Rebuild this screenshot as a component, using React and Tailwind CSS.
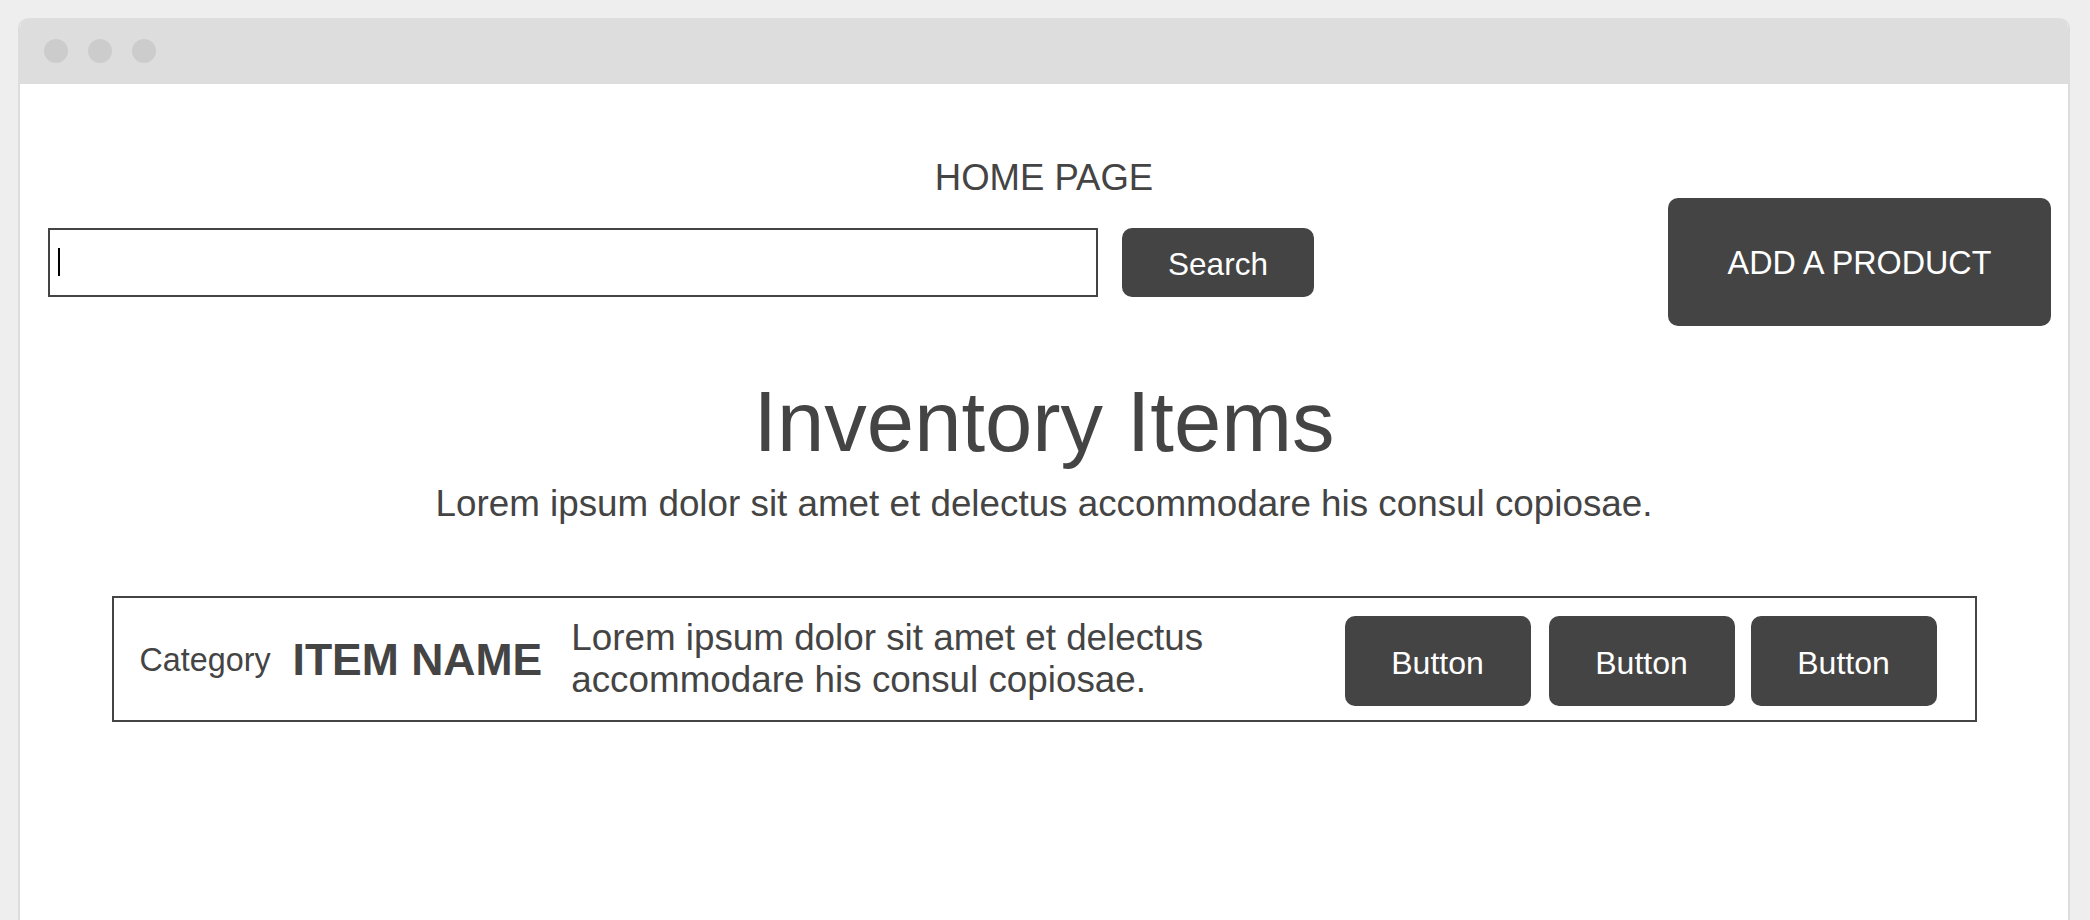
export default function App() {
  const font = { fontFamily: '"Liberation Sans", Arial, sans-serif' };
  return (
    <div className="w-[2090px] h-[920px] bg-[#eeeeee] pt-[18px] pl-[18px] pr-[20px] overflow-hidden" style={font}>
      <div className="h-[902px] bg-white rounded-t-[10px] border-x-2 border-[#dddddd] overflow-hidden text-[#444444]">
        <div className="h-[66px] bg-[#dddddd] flex items-center pl-[24px] gap-[20px]">
          <div className="w-[24px] h-[24px] rounded-full bg-[#cccccc]" />
          <div className="w-[24px] h-[24px] rounded-full bg-[#cccccc]" />
          <div className="w-[24px] h-[24px] rounded-full bg-[#cccccc]" />
        </div>

        <div className="pt-[74px]">
          <div className="text-center text-[36.5px] leading-[40px]">HOME PAGE</div>
          <div className="flex items-center pl-[28px] pr-[17px]">
            <div className="w-[1050px] h-[69px] border-2 border-[#444444] flex items-center pl-[8px]">
              <div className="w-[2px] h-[28px] bg-black" />
            </div>
            <button className="ml-[24px] w-[192px] h-[69px] rounded-[10px] bg-[#444444] text-white text-[31.5px] pt-[5px]">
              Search
            </button>
            <div className="flex-1" />
            <button className="w-[383px] h-[128px] rounded-[10px] bg-[#444444] text-white text-[32.3px] pt-[2px]">
              ADD A PRODUCT
            </button>
          </div>

          <h1 className="mt-[54px] text-center text-[85px] leading-[84px]">Inventory Items</h1>
          <p className="mt-[21px] text-center text-[36.8px] leading-[37px]">
            Lorem ipsum dolor sit amet et delectus accommodare his consul copiosae.
          </p>

          <div className="mt-[74px] flex justify-center">
            <div className="w-[1865px] h-[126px] border-2 border-[#444444] flex items-center pl-[26px] pr-[38px]">
              <div className="text-[32.3px] leading-[36px] pt-[2px]">Category</div>
              <div className="ml-[22px] text-[44.5px] leading-[50px] font-bold pt-[2px]">ITEM NAME</div>
              <div className="ml-[29px] flex-1 text-[36.8px] leading-[42px]">
                Lorem ipsum dolor sit amet et delectus accommodare his consul copiosae.
              </div>
              <div className="flex mt-[4px]">
                <button className="w-[186px] h-[90px] rounded-[10px] bg-[#444444] text-white text-[32px] pt-[3px]">Button</button>
                <button className="ml-[18px] w-[186px] h-[90px] rounded-[10px] bg-[#444444] text-white text-[32px] pt-[3px]">Button</button>
                <button className="ml-[16px] w-[186px] h-[90px] rounded-[10px] bg-[#444444] text-white text-[32px] pt-[3px]">Button</button>
              </div>
            </div>
          </div>
        </div>
      </div>
    </div>
  );
}
